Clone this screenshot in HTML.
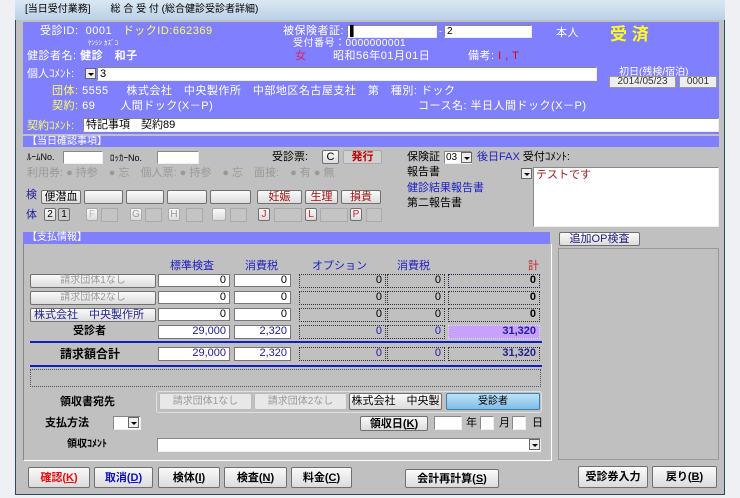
<!DOCTYPE html>
<html><head><meta charset="utf-8">
<style>
*{margin:0;padding:0;box-sizing:border-box}
body{width:740px;height:498px;background:#eef0f3;position:relative;overflow:hidden;font-family:"Liberation Sans","Noto Sans CJK JP",sans-serif;font-size:11px;color:#000}
.a{position:absolute;white-space:nowrap;line-height:1}
.win{position:absolute;left:15px;top:0;width:710px;height:495px;background:#c0c0c0;border:1px solid #2a4a60;border-top:none}
.tb{position:absolute;left:15px;top:0;width:710px;height:20px;background:linear-gradient(#dbe8f3,#b9d1e6)}
.bl{position:absolute;background:#8080ff}
.in{position:absolute;background:#fff;border:1px solid #888;border-right-color:#eee;border-bottom-color:#eee}
.bt{position:absolute;background:linear-gradient(#fafafa,#dcdcdc);border:1px solid #707070;border-radius:2px;text-align:center;font-size:11px;line-height:1}
.dd{position:absolute;width:11px;height:11px;background:#eee;border:1px solid #666}
.dd:after{content:"";position:absolute;left:2px;top:4px;border-left:3px solid transparent;border-right:3px solid transparent;border-top:3px solid #000}
.w{color:#fff}.y{color:#ffff60}
.dot{position:absolute;border:1px dotted #333;text-align:right;padding-right:3px;font-size:11px;line-height:11px}
.num{position:absolute;background:#fff;border:1px solid #777;text-align:right;padding-right:3px;font-size:11px;line-height:11px}
.b{font-weight:bold}
.eb{position:absolute;top:208px;height:14px;border:1px solid #aaa;background:#c4c4c4}
.top .a{letter-spacing:0.5px}
</style></head><body>
<div class="win"></div>
<div class="tb"></div>
<div class="a" style="left:25px;top:5px;font-size:10px">[当日受付業務]　　総 合 受 付 (総合健診受診者詳細)</div>

<div class="bl" style="left:23px;top:22px;width:696px;height:112px"></div>
<div class="top">
<div class="a w" style="left:40px;top:26px">受診ID:&nbsp; 0001&nbsp;&nbsp; <span class="y">ドックID:662369</span></div>
<div class="a w" style="left:283px;top:26px">被保険者証:</div>
<div class="a w" style="left:556px;top:28px">本人</div>
<div class="a w" style="left:293px;top:39px;font-size:10px">受付番号：0000000001</div>
<div class="a w" style="left:27px;top:51px">健診者名: <b>健診　和子</b></div>
<div class="a" style="left:295px;top:51px;color:#e02060">女</div>
<div class="a w" style="left:333px;top:51px">昭和56年01月01日</div>
<div class="a w" style="left:468px;top:51px">備考: <span style="color:#e00000">I , T</span></div>
<div class="a w" style="left:52px;top:86px"><span class="y">団体:</span> 5555&nbsp;&nbsp;&nbsp;&nbsp; 株式会社　中央製作所　中部地区名古屋支社　第　種別: ドック</div>
<div class="a w" style="left:52px;top:101px"><span class="y">契約:</span> 69&nbsp;&nbsp;&nbsp;&nbsp;&nbsp;&nbsp; 人間ドック(X－P)</div>
<div class="a w" style="left:418px;top:101px">コース名: 半日人間ドック(X－P)</div>
</div>
<div class="in" style="left:347px;top:25px;width:90px;height:13px;font-size:10px;padding-left:2px;line-height:11px">▌</div>
<div class="a w" style="left:439px;top:27px;font-size:9px">-</div>
<div class="in" style="left:444px;top:25px;width:88px;height:13px;font-size:10px;padding-left:2px;line-height:11px">2</div>
<div class="a" style="left:610px;top:26px;font-size:17px;font-weight:bold;color:#ffff20">受 済</div>
<div class="a w" style="left:88px;top:40px;font-size:7px">ｹﾝｼﾝ ｶｽﾞｺ</div>
<div class="a w" style="left:27px;top:69px">個人ｺﾒﾝﾄ:</div>
<div class="dd" style="left:85px;top:68px"></div>
<div class="in" style="left:97px;top:67px;width:500px;height:14px;padding-left:2px;line-height:12px">3</div>
<div class="a w" style="left:619px;top:68px;font-size:10px">初日(残検/宿泊)</div>
<div class="a" style="left:609px;top:76px;width:67px;height:12px;background:#eee;border:1px solid #999;font-size:10px;text-align:center;line-height:10px;color:#333">2014/05/23</div>
<div class="a" style="left:679px;top:76px;width:38px;height:12px;background:#eee;border:1px solid #999;font-size:10px;text-align:center;line-height:10px;color:#333">0001</div>
<div class="a y" style="left:27px;top:121px">契約ｺﾒﾝﾄ:</div>
<div class="in" style="left:83px;top:118px;width:636px;height:14px;padding-left:2px;line-height:12px">特記事項　契約89</div>

<div class="bl" style="left:23px;top:136px;width:696px;height:11px"></div>
<div class="a w" style="left:27px;top:137px;font-size:10px">【当日確認事項】</div>
<div class="a" style="left:27px;top:153px;font-size:9px">ﾙｰﾑNo.</div>
<div class="in" style="left:63px;top:151px;width:40px;height:13px"></div>
<div class="a" style="left:110px;top:154px;font-size:9px">ﾛｯｶｰNo.</div>
<div class="in" style="left:157px;top:151px;width:42px;height:13px"></div>
<div class="a" style="left:272px;top:152px">受診票:</div>
<div class="bt" style="left:322px;top:150px;width:17px;height:14px;padding-top:1px">C</div>
<div class="bt" style="left:343px;top:150px;width:39px;height:14px;padding-top:1px;color:#c00000;font-weight:bold;background:#d0d0d0;border-color:#aaa">発行</div>
<div class="a" style="left:27px;top:168px;color:#999">利用券: ● 持参　● 忘　個人票: ● 持参　● 忘　面接:　● 有 ● 無</div>
<div class="a" style="left:407px;top:152px">保険証</div>
<div class="in" style="left:444px;top:151px;width:28px;height:13px;padding-left:1px;line-height:11px;font-size:10px">03</div>
<div class="dd" style="left:461px;top:152px"></div>
<div class="a" style="left:477px;top:152px;color:#2020c0">後日FAX <span style="color:#000">受付ｺﾒﾝﾄ:</span></div>
<div class="a" style="left:407px;top:167px">報告書</div>
<div class="a" style="left:407px;top:183px;color:#2020c0">健診結果報告書</div>
<div class="a" style="left:407px;top:198px">第二報告書</div>
<div class="dd" style="left:521px;top:168px"></div>
<div class="in" style="left:533px;top:167px;width:186px;height:60px;padding:2px;color:#a02020;line-height:11px">テストです</div>

<div class="a" style="left:26px;top:190px;color:#2020a0">検</div>
<div class="bt" style="left:41px;top:190px;width:40px;height:14px;padding-top:1px">便潜血</div>
<div class="bt" style="left:84px;top:190px;width:39px;height:14px"></div>
<div class="bt" style="left:126px;top:190px;width:38px;height:14px"></div>
<div class="bt" style="left:167px;top:190px;width:40px;height:14px"></div>
<div class="bt" style="left:210px;top:190px;width:41px;height:14px"></div>
<div class="bt" style="left:257px;top:190px;width:45px;height:14px;padding-top:1px;color:#a01010">妊娠</div>
<div class="bt" style="left:305px;top:190px;width:33px;height:14px;padding-top:1px;color:#a01010">生理</div>
<div class="bt" style="left:341px;top:190px;width:40px;height:14px;padding-top:1px;color:#a01010">損貴</div>
<div class="a" style="left:26px;top:210px;color:#2020a0">体</div>
<div class="bt" style="left:44px;top:208px;width:12px;height:13px;padding-top:1px;font-size:10px">2</div>
<div class="bt" style="left:58px;top:208px;width:12px;height:13px;padding-top:1px;font-size:10px;background:#ccc">1</div>
<div class="bt" style="left:86px;top:208px;width:12px;height:13px;padding-top:1px;font-size:10px;color:#bbb;border-color:#aaa">F</div>
<div class="eb" style="left:101px;width:17px"></div>
<div class="bt" style="left:130px;top:208px;width:12px;height:13px;padding-top:1px;font-size:10px;color:#999;border-color:#aaa">G</div>
<div class="eb" style="left:145px;width:17px"></div>
<div class="bt" style="left:168px;top:208px;width:12px;height:13px;padding-top:1px;font-size:10px;color:#999;border-color:#aaa">H</div>
<div class="eb" style="left:186px;width:17px"></div>
<div class="bt" style="left:212px;top:208px;width:14px;height:13px;border-color:#aaa"></div>
<div class="eb" style="left:230px;width:17px"></div>
<div class="bt" style="left:258px;top:208px;width:12px;height:13px;padding-top:1px;font-size:10px;color:#d02020">J</div>
<div class="eb" style="left:274px;width:28px"></div>
<div class="bt" style="left:305px;top:208px;width:12px;height:13px;padding-top:1px;font-size:10px;color:#d02020">L</div>
<div class="eb" style="left:320px;width:28px"></div>
<div class="bt" style="left:350px;top:208px;width:12px;height:13px;padding-top:1px;font-size:10px;color:#d02020">P</div>
<div class="eb" style="left:366px;width:16px"></div>

<div class="bl" style="left:23px;top:232px;width:527px;height:12px"></div>
<div class="a w" style="left:27px;top:233px;font-size:10px">【支払情報】</div>
<div class="a" style="left:23px;top:244px;width:529px;height:217px;border:1px solid #888;border-top:none;border-right-color:#fff;border-bottom-color:#fff"></div>
<div class="bt" style="left:559px;top:232px;width:81px;height:14px;padding-top:1px;color:#202080">追加OP検査</div>
<div class="a" style="left:558px;top:248px;width:161px;height:212px;border:1px solid #999"></div>

<div class="a" style="left:170px;top:261px;color:#2020c0">標準検査</div>
<div class="a" style="left:245px;top:261px;color:#2020c0">消費税</div>
<div class="a" style="left:312px;top:261px;color:#2020c0">オプション</div>
<div class="a" style="left:397px;top:261px;color:#2020c0">消費税</div>
<div class="a" style="left:528px;top:261px;color:#d02020">計</div>

<div class="bt" style="left:30px;top:274px;width:126px;height:14px;padding-top:1px;color:#999;font-size:10px">請求団体1なし</div>
<div class="bt" style="left:30px;top:291px;width:126px;height:14px;padding-top:1px;color:#999;font-size:10px">請求団体2なし</div>
<div class="bt" style="left:30px;top:308px;width:126px;height:14px;padding-top:1px;color:#202090;text-align:left;padding-left:3px">株式会社　中央製作所</div>
<div class="a b" style="left:73px;top:326px;color:#000">受診者</div>
<div class="a b" style="left:60px;top:348px;font-size:12px">請求額合計</div>

<div class="num" style="left:158px;top:274px;width:72px;height:13px">0</div>
<div class="num" style="left:234px;top:274px;width:57px;height:13px">0</div>
<div class="num" style="left:158px;top:291px;width:72px;height:13px">0</div>
<div class="num" style="left:234px;top:291px;width:57px;height:13px">0</div>
<div class="num" style="left:158px;top:308px;width:72px;height:13px">0</div>
<div class="num" style="left:234px;top:308px;width:57px;height:13px">0</div>
<div class="num" style="left:158px;top:325px;width:72px;height:14px;color:#202090">29,000</div>
<div class="num" style="left:234px;top:325px;width:57px;height:14px;color:#202090">2,320</div>
<div class="num" style="left:158px;top:347px;width:72px;height:14px;color:#202090">29,000</div>
<div class="num" style="left:234px;top:347px;width:57px;height:14px;color:#202090">2,320</div>

<div class="dot" style="left:299px;top:274px;width:87px;height:14px">0</div>
<div class="dot" style="left:387px;top:274px;width:58px;height:14px">0</div>
<div class="dot" style="left:448px;top:274px;width:92px;height:14px;border-color:#224;font-weight:bold">0</div>
<div class="dot" style="left:299px;top:291px;width:87px;height:14px">0</div>
<div class="dot" style="left:387px;top:291px;width:58px;height:14px">0</div>
<div class="dot" style="left:448px;top:291px;width:92px;height:14px;font-weight:bold">0</div>
<div class="dot" style="left:299px;top:308px;width:87px;height:14px">0</div>
<div class="dot" style="left:387px;top:308px;width:58px;height:14px">0</div>
<div class="dot" style="left:448px;top:308px;width:92px;height:14px;font-weight:bold">0</div>
<div class="dot" style="left:299px;top:325px;width:87px;height:14px;color:#2020c0">0</div>
<div class="dot" style="left:387px;top:325px;width:58px;height:14px;color:#2020c0">0</div>
<div class="dot" style="left:448px;top:325px;width:92px;height:14px;background:#c8a0ff;color:#2020a0;font-weight:bold;border-color:#ddd">31,320</div>
<div class="dot" style="left:299px;top:347px;width:87px;height:14px;color:#202090">0</div>
<div class="dot" style="left:387px;top:347px;width:58px;height:14px;color:#202090">0</div>
<div class="dot" style="left:448px;top:347px;width:92px;height:14px;color:#202090;font-weight:bold">31,320</div>

<div class="a" style="left:30px;top:341px;width:512px;height:2px;background:#1020c0"></div>
<div class="a" style="left:30px;top:365px;width:512px;height:2px;background:#1020c0"></div>
<div class="a" style="left:30px;top:369px;width:511px;height:18px;border:1px dotted #555"></div>

<div class="a b" style="left:60px;top:397px">領収書宛先</div>
<div class="a" style="left:156px;top:391px;width:386px;height:22px;border:1px solid #e0e0e0;border-radius:3px"></div>
<div class="bt" style="left:159px;top:393px;width:93px;height:17px;padding-top:3px;color:#999;font-size:10px;background:#e8e8e8;border-color:#bbb">請求団体1なし</div>
<div class="bt" style="left:254px;top:393px;width:93px;height:17px;padding-top:3px;color:#999;font-size:10px;background:#e8e8e8;border-color:#bbb">請求団体2なし</div>
<div class="bt" style="left:349px;top:393px;width:93px;height:17px;padding-top:2px;overflow:hidden">株式会社　中央製</div>
<div class="bt" style="left:446px;top:393px;width:94px;height:17px;padding-top:3px;font-size:10px;background:linear-gradient(#bfe2f7,#7fbde6);border-color:#3c7fb1">受診者</div>
<div class="a b" style="left:45px;top:418px">支払方法</div>
<div class="in" style="left:113px;top:416px;width:28px;height:14px"></div>
<div class="dd" style="left:128px;top:417px"></div>
<div class="bt" style="left:360px;top:416px;width:68px;height:15px;padding-top:2px;font-weight:bold">領収日(<u>K</u>)</div>
<div class="in" style="left:434px;top:416px;width:28px;height:14px"></div>
<div class="a" style="left:466px;top:418px">年</div>
<div class="in" style="left:480px;top:416px;width:14px;height:14px"></div>
<div class="a" style="left:499px;top:418px">月</div>
<div class="in" style="left:512px;top:416px;width:14px;height:14px"></div>
<div class="a" style="left:532px;top:418px">日</div>
<div class="a b" style="left:67px;top:440px;font-size:10px">領収ｺﾒﾝﾄ</div>
<div class="in" style="left:157px;top:438px;width:384px;height:14px"></div>
<div class="dd" style="left:529px;top:439px"></div>

<div class="bt" style="left:28px;top:467px;width:62px;height:21px;padding-top:5px;font-weight:bold;color:#e01010">確認(<u>K</u>)</div>
<div class="bt" style="left:94px;top:467px;width:59px;height:21px;padding-top:5px;font-weight:bold;color:#1010c0">取消(<u>D</u>)</div>
<div class="bt" style="left:158px;top:467px;width:62px;height:21px;padding-top:5px;font-weight:bold">検体(<u>I</u>)</div>
<div class="bt" style="left:224px;top:467px;width:63px;height:21px;padding-top:5px;font-weight:bold">検査(<u>N</u>)</div>
<div class="bt" style="left:291px;top:467px;width:61px;height:21px;padding-top:5px;font-weight:bold">料金(<u>C</u>)</div>
<div class="bt" style="left:405px;top:469px;width:94px;height:19px;padding-top:4px;font-weight:bold">会計再計算(<u>S</u>)</div>
<div class="bt" style="left:578px;top:466px;width:70px;height:22px;padding-top:5px;font-weight:bold">受診券入力</div>
<div class="bt" style="left:652px;top:466px;width:65px;height:22px;padding-top:5px;font-weight:bold">戻り(<u>B</u>)</div>
</body></html>
